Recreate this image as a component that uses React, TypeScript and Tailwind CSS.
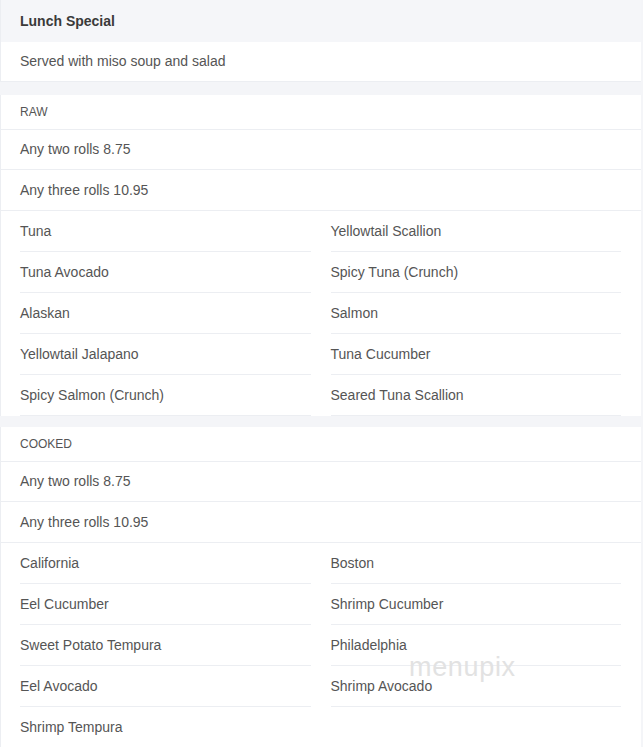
import React from "react";

const raw = [
  "Tuna",
  "Yellowtail Scallion",
  "Tuna Avocado",
  "Spicy Tuna (Crunch)",
  "Alaskan",
  "Salmon",
  "Yellowtail Jalapano",
  "Tuna Cucumber",
  "Spicy Salmon (Crunch)",
  "Seared Tuna Scallion",
];

const cooked = [
  "California",
  "Boston",
  "Eel Cucumber",
  "Shrimp Cucumber",
  "Sweet Potato Tempura",
  "Philadelphia",
  "Eel Avocado",
  "Shrimp Avocado",
  "Shrimp Tempura",
];

function Section({ title, items }: { title: string; items: string[] }) {
  return (
    <div className="bg-white border-l border-[#eceef2]">
      <div className="h-[35px] flex items-center pl-[19px] pr-5 text-[12px] text-[#555] uppercase border-b border-[#eceef2]">
        {title}
      </div>
      <div className="h-[40px] flex items-center pl-[19px] pr-5 text-[14px] text-[#555] border-b border-[#eceef2]">
        Any two rolls 8.75
      </div>
      <div className="h-[41px] flex items-center pl-[19px] pr-5 text-[14px] text-[#555] border-b border-[#eceef2]">
        Any three rolls 10.95
      </div>
      <div className="grid grid-cols-2 gap-x-5 pl-[19px] pr-5">
        {items.map((item, i) => (
          <div
            key={i}
            className="h-[41px] flex items-center text-[14px] text-[#555] border-b border-[#eceef2]"
          >
            {item}
          </div>
        ))}
      </div>
    </div>
  );
}

export default function App() {
  return (
    <div
      className="relative w-[643px] h-[747px] overflow-hidden bg-[#f4f5f8] pr-[2px]"
      style={{ fontFamily: '"Liberation Sans", Arial, sans-serif' }}
    >
      <div className="h-[42px] flex items-center pl-[19px] pr-5 bg-[#f5f6f9] text-[14px] font-bold text-[#3a3a3a] border-l border-[#eceef2]">
        Lunch Special
      </div>
      <div className="h-[40px] flex items-center pl-[19px] pr-5 bg-white text-[14px] text-[#555] border-l border-b border-[#eceef2]">
        Served with miso soup and salad
      </div>
      <div className="h-[13px]" />
      <Section title="RAW" items={raw} />
      <div className="h-[11px]" />
      <Section title="COOKED" items={cooked} />

      <div className="absolute left-[409px] top-[647px] text-[27px] font-light text-[#e2e2e2] tracking-wide pointer-events-none">
        menupix
      </div>
    </div>
  );
}
